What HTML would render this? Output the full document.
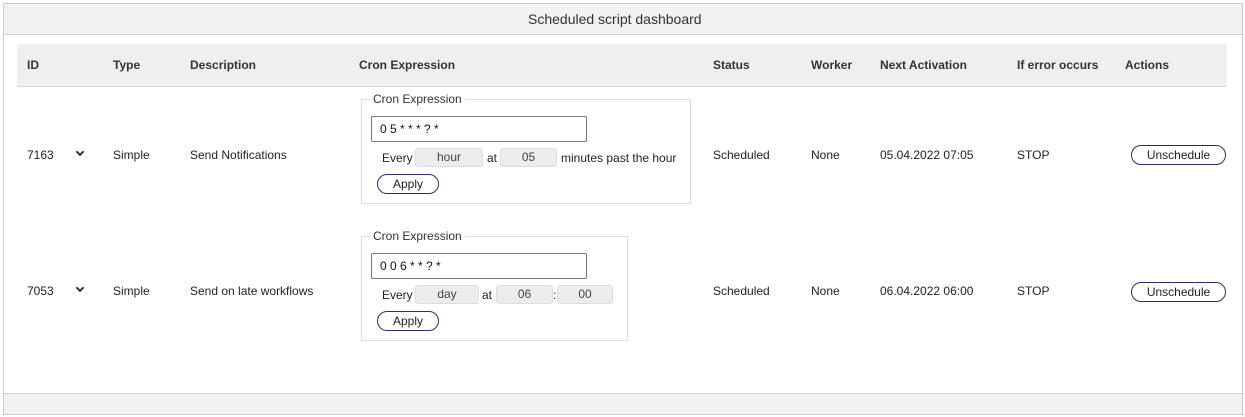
<!DOCTYPE html>
<html><head><meta charset="utf-8"><style>
*{box-sizing:border-box;margin:0;padding:0}
body{width:1245px;height:417px;background:#fff;font-family:"Liberation Sans",Arial,sans-serif;font-size:12px;color:#222;position:relative;overflow:hidden}
.a{position:absolute;white-space:nowrap}
.outer{left:3px;top:3px;width:1240px;height:412px;border:1px solid #ccc;background:#fff}
.top{left:4px;top:4px;width:1238px;height:31px;background:#eff1f3;border-bottom:1px solid #d0d0d0}
.foot{left:4px;top:393px;width:1238px;height:21px;background:#f1f1f1;border-top:1px solid #d0d0d0}
.th{left:17px;top:44px;width:1210px;height:43px;background:#efefef;border-bottom:1px solid #d8d8d8}
.h{font-weight:bold;top:58px;color:#333}
.fs{border:1px solid #ddd}
.lg{background:#fff;padding:0 3px;color:#333}
.inp{border:1px solid #777;border-radius:2px;background:#fff;padding-left:8px;line-height:24px;color:#111}
.box{background:#ececec;border:1px solid #ddd;border-radius:3px;text-align:center;line-height:17px;color:#444}
.btn{border:1px solid #2d2f6e;border-radius:10px;text-align:center;line-height:19px;color:#222;background:#fff}
.ch{width:6px;height:6px;border-right:2px solid #333;border-bottom:2px solid #333;transform:rotate(45deg)}
</style></head><body>
<div class="a outer"></div>
<div class="a top"></div>
<div class="a" style="left:528px;top:11px;font-size:14px;color:#333">Scheduled script dashboard</div>
<div class="a th"></div>
<div class="a h" style="left:27px">ID</div>
<div class="a h" style="left:113px">Type</div>
<div class="a h" style="left:190px">Description</div>
<div class="a h" style="left:359px">Cron Expression</div>
<div class="a h" style="left:713px">Status</div>
<div class="a h" style="left:811px">Worker</div>
<div class="a h" style="left:880px">Next Activation</div>
<div class="a h" style="left:1017px">If error occurs</div>
<div class="a h" style="left:1125px">Actions</div>

<!-- row1 -->
<div class="a" style="left:27px;top:148px">7163</div>
<div class="a ch" style="left:77px;top:149px"></div>
<div class="a" style="left:113px;top:148px">Simple</div>
<div class="a" style="left:190px;top:148px">Send Notifications</div>
<div class="a fs" style="left:361px;top:99px;width:330px;height:105px"></div>
<div class="a lg" style="left:370px;top:92px">Cron Expression</div>
<div class="a inp" style="left:371px;top:116px;width:216px;height:26px">0 5 * * * ? *</div>
<div class="a" style="left:382px;top:151px">Every</div>
<div class="a box" style="left:415px;top:148px;width:68px;height:19px">hour</div>
<div class="a" style="left:487px;top:151px">at</div>
<div class="a box" style="left:500px;top:148px;width:57px;height:19px">05</div>
<div class="a" style="left:561px;top:151px">minutes past the hour</div>
<div class="a btn" style="left:377px;top:174px;width:62px;height:20px">Apply</div>
<div class="a" style="left:713px;top:148px">Scheduled</div>
<div class="a" style="left:811px;top:148px">None</div>
<div class="a" style="left:880px;top:148px">05.04.2022 07:05</div>
<div class="a" style="left:1017px;top:148px">STOP</div>
<div class="a btn" style="left:1131px;top:145px;width:95px;height:20px">Unschedule</div>

<!-- row2 -->
<div class="a" style="left:27px;top:284px">7053</div>
<div class="a ch" style="left:77px;top:285px"></div>
<div class="a" style="left:113px;top:284px">Simple</div>
<div class="a" style="left:190px;top:284px">Send on late workflows</div>
<div class="a fs" style="left:361px;top:236px;width:267px;height:105px"></div>
<div class="a lg" style="left:370px;top:229px">Cron Expression</div>
<div class="a inp" style="left:371px;top:253px;width:216px;height:26px">0 0 6 * * ? *</div>
<div class="a" style="left:382px;top:288px">Every</div>
<div class="a box" style="left:415px;top:285px;width:64px;height:19px">day</div>
<div class="a" style="left:482px;top:288px">at</div>
<div class="a box" style="left:496px;top:285px;width:57px;height:19px">06</div>
<div class="a" style="left:553px;top:288px">:</div>
<div class="a box" style="left:557px;top:285px;width:56px;height:19px">00</div>
<div class="a btn" style="left:377px;top:311px;width:62px;height:20px">Apply</div>
<div class="a" style="left:713px;top:284px">Scheduled</div>
<div class="a" style="left:811px;top:284px">None</div>
<div class="a" style="left:880px;top:284px">06.04.2022 06:00</div>
<div class="a" style="left:1017px;top:284px">STOP</div>
<div class="a btn" style="left:1131px;top:282px;width:95px;height:20px">Unschedule</div>

<div class="a foot"></div>
</body></html>
